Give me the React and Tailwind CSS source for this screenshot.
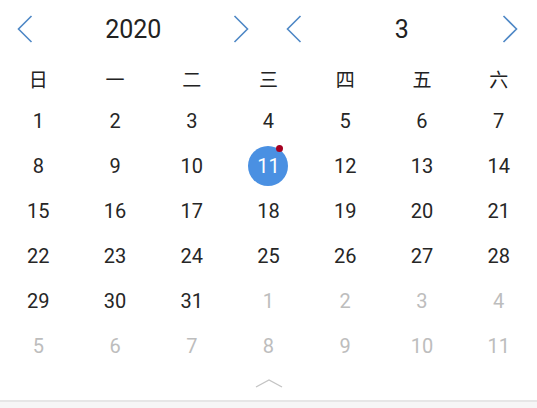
import React from "react";

function Chevron({ dir }) {
  return (
    <svg width="16" height="28" viewBox="0 0 16 28" fill="none">
      {dir === "left" ? (
        <path d="M14.5 1 L1.5 14 L14.5 27" stroke="#4f88c6" strokeWidth="1.6" />
      ) : (
        <path d="M1.5 1 L14.5 14 L1.5 27" stroke="#4f88c6" strokeWidth="1.6" />
      )}
    </svg>
  );
}

function Picker({ value }) {
  return (
    <div className="flex-1 flex items-center justify-between pl-[17px] pr-[19px]">
      <Chevron dir="left" />
      <span className="text-[25px] text-[#222] leading-none">{value}</span>
      <Chevron dir="right" />
    </div>
  );
}

const weeks = ["日", "一", "二", "三", "四", "五", "六"];
const days = [
  ...Array.from({ length: 31 }, (_, i) => ({ d: i + 1, cur: true })),
  ...Array.from({ length: 11 }, (_, i) => ({ d: i + 1, cur: false })),
];

export default function App() {
  return (
    <div
      className="w-[537px] h-[408px] bg-white flex flex-col overflow-hidden"
      style={{ fontFamily: "Roboto, 'Noto Sans CJK SC', sans-serif" }}
    >
      <div className="h-[58px] flex">
        <Picker value="2020" />
        <Picker value="3" />
      </div>
      <div className="grid grid-cols-7 h-[40px] pt-[4px] items-center">
        {weeks.map((w) => (
          <div key={w} className="text-center text-[19px] text-[#222] leading-none">
            {w}
          </div>
        ))}
      </div>
      <div className="grid grid-cols-7 auto-rows-[45px]">
        {days.map((x, i) => (
          <div key={i} className="flex items-center justify-center">
            {x.cur && x.d === 11 ? (
              <div className="relative w-[40px] h-[40px] rounded-full bg-[#4a90e2] flex items-center justify-center text-white text-[20px]">
                11
                <span className="absolute right-[5px] top-[-1px] w-[7px] h-[7px] rounded-full bg-[#a50021]" />
              </div>
            ) : (
              <span className={`text-[20px] ${x.cur ? "text-[#262626]" : "text-[#bdbdbd]"}`}>{x.d}</span>
            )}
          </div>
        ))}
      </div>
      <div className="flex-1 flex items-center justify-center pb-[2px]">
        <svg width="28" height="10" viewBox="0 0 28 10" fill="none">
          <path d="M1 9 L14 2 L27 9" stroke="#c4c4c4" strokeWidth="1.4" />
        </svg>
      </div>
      <div className="h-[8px] border-t-2 border-[#e6e6e6] bg-[#f6f6f6]" />
    </div>
  );
}
